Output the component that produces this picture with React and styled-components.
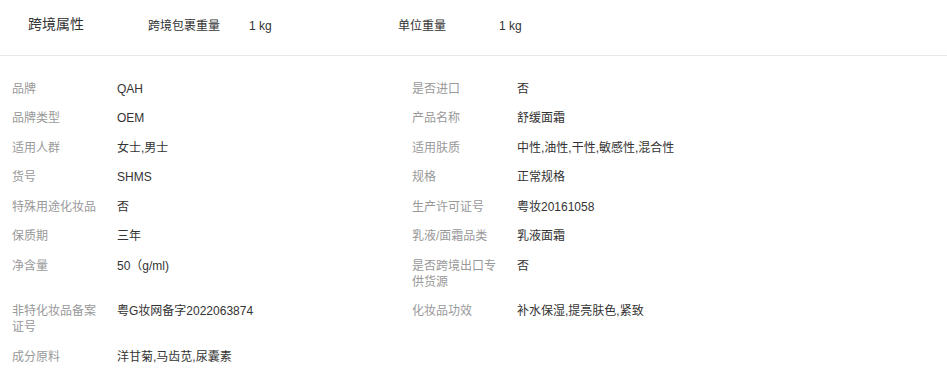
import React from 'react';
import styled, { createGlobalStyle } from 'styled-components';

const GlobalStyle = createGlobalStyle`
  html, body {
    margin: 0;
    padding: 0;
    background: #fff;
  }
  body {
    font-family: "Liberation Sans", Arial, "Noto Sans CJK SC", sans-serif;
    color: #333;
  }
`;

const Panel = styled.div`
  width: 947px;
`;

const CrossBorder = styled.div`
  display: flex;
  align-items: center;
  height: 56px;
  box-sizing: border-box;
  padding-bottom: 7px;
  border-bottom: 1px solid #e8e8e8;
`;

const SectionTitle = styled.div`
  width: 120px;
  padding-left: 28px;
  font-size: 14px;
  line-height: 18px;
  color: #333;
`;

const Pair = styled.div`
  display: flex;
  align-items: baseline;
  width: 250px;
  padding-top: 3px;
  font-size: 12px;
  line-height: 16px;
  color: #333;
`;

const PairLabel = styled.span`
  width: 101px;
`;

const Attributes = styled.div`
  display: grid;
  grid-template-columns: 400px 400px;
  padding: 18px 0 0 12px;
`;

const Item = styled.div`
  display: flex;
  align-items: baseline;
  padding: 6.75px 0;
  font-size: 12px;
  line-height: 16px;
`;

const Label = styled.div`
  width: 93px;
  margin-right: 12px;
  color: #999;
  flex-shrink: 0;
`;

const Value = styled.div`
  color: #333;
`;

const items = [
  ['品牌', 'QAH'],
  ['是否进口', '否'],
  ['品牌类型', 'OEM'],
  ['产品名称', '舒缓面霜'],
  ['适用人群', '女士,男士'],
  ['适用肤质', '中性,油性,干性,敏感性,混合性'],
  ['货号', 'SHMS'],
  ['规格', '正常规格'],
  ['特殊用途化妆品', '否'],
  ['生产许可证号', '粤妆20161058'],
  ['保质期', '三年'],
  ['乳液/面霜品类', '乳液面霜'],
  ['净含量', '50（g/ml)'],
  ['是否跨境出口专供货源', '否'],
  ['非特化妆品备案证号', '粤G妆网备字2022063874'],
  ['化妆品功效', '补水保湿,提亮肤色,紧致'],
  ['成分原料', '洋甘菊,马齿苋,尿囊素'],
];

const App = () => (
  <Panel>
    <GlobalStyle />
    <CrossBorder>
      <SectionTitle>跨境属性</SectionTitle>
      <Pair>
        <PairLabel>跨境包裹重量</PairLabel>
        <span>1 kg</span>
      </Pair>
      <Pair>
        <PairLabel>单位重量</PairLabel>
        <span>1 kg</span>
      </Pair>
    </CrossBorder>
    <Attributes>
      {items.map(([label, value]) => (
        <Item key={label}>
          <Label>{label}</Label>
          <Value>{value}</Value>
        </Item>
      ))}
    </Attributes>
  </Panel>
);

export default App;
